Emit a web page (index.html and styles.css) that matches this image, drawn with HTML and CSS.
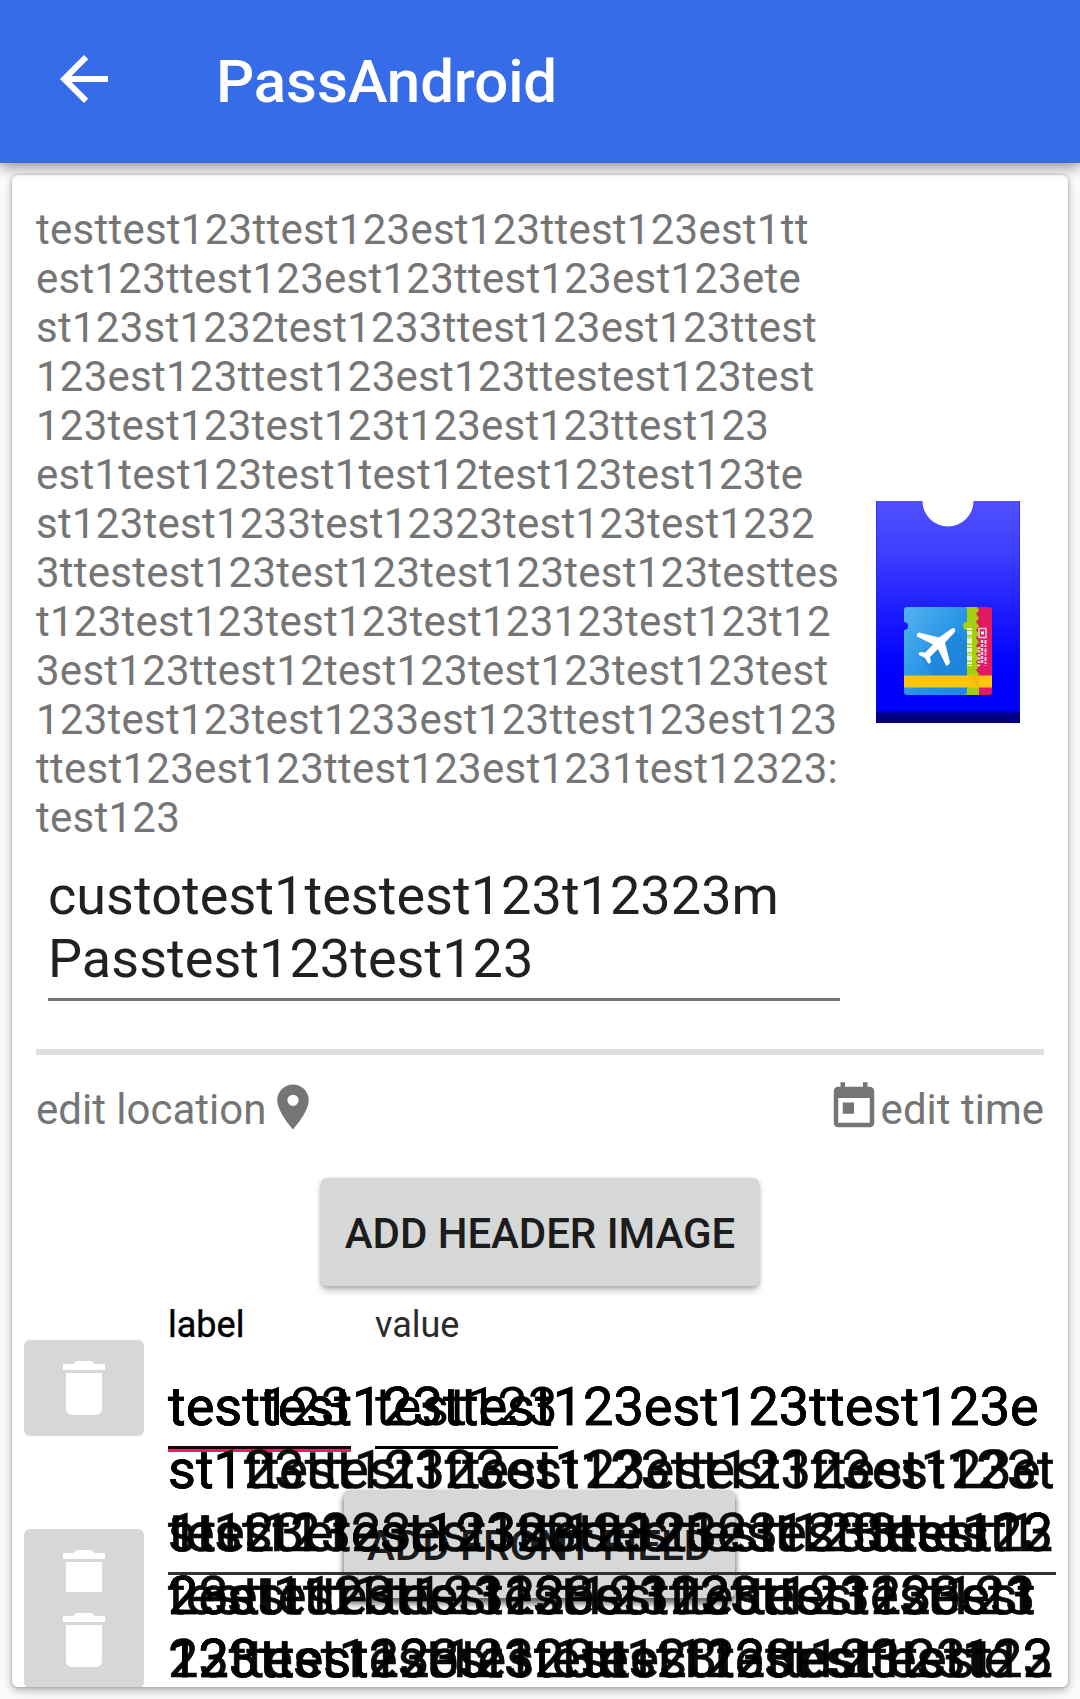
FILE: index.html
```html
<!DOCTYPE html>
<html lang="en">
<head>
<meta charset="utf-8">
<title>PassAndroid</title>
<link rel="stylesheet" href="styles.css">
</head>
<body>
<header class="appbar">
  <svg class="back" viewBox="0 0 24 24"><path d="M20 11H7.83l5.59-5.59L12 4l-8 8 8 8 1.41-1.41L7.83 13H20v-2z"/></svg>
  <h1 class="title">PassAndroid</h1>
</header>
<main class="card">
  <section class="summary">
    <div class="texts">
      <p class="intro">testtest123ttest123est123ttest123est1tt<br>est123ttest123est123ttest123est123ete<br>st123st1232test1233ttest123est123ttest<br>123est123ttest123est123ttestest123test<br>123test123test123t123est123ttest123<br>est1test123test1test12test123test123te<br>st123test1233test12323test123test1232<br>3ttestest123test123test123test123testtes<br>t123test123test123test123123test123t12<br>3est123ttest12test123test123test123test<br>123test123test1233est123ttest123est123<br>ttest123est123ttest123est1231test12323:<br>test123</p>
      <div class="name">custotest1testest123t12323m<br>Passtest123test123</div>
    </div>
    <svg class="pass" viewBox="0 0 144 222">
      <defs>
        <linearGradient id="body" x1="0" y1="0" x2="0" y2="1"><stop offset="0" stop-color="#5050ff"/><stop offset=".25" stop-color="#3c3cff"/><stop offset=".5" stop-color="#1c1cff"/><stop offset=".75" stop-color="#0000ff"/></linearGradient>
        <linearGradient id="edge" x1="0" y1="0" x2="0" y2="1"><stop offset="0" stop-color="#0000cc"/><stop offset=".3" stop-color="#000080"/></linearGradient>
        <linearGradient id="ticket" x1="0" y1="0" x2="1" y2="1"><stop offset="0" stop-color="#54b2ee"/><stop offset=".6" stop-color="#2291e5"/><stop offset="1" stop-color="#1e88e5"/></linearGradient>
      </defs>
      <path fill="url(#body)" d="M0 0H46.500A25.500 25.500 0 0 0 97.500 0H144V222H0z"/>
      <path fill="url(#edge)" d="M0 210H144V222H0z"/>
      <path fill="none" stroke="#2020c0" stroke-opacity=".6" d="M.5 0V210M143.500 0V210"/>
      <rect x="85" y="106" width="31" height="88" rx="3" fill="#e01b62"/>
      <path fill="#a4cf0b" d="M80 106h21l2 3-3 4 3 4-3 4 3 4-3 4 3 4-3 4 3 4-3 4 3 4-3 4 3 4-3 4 3 4-3 4 3 4-3 4 3 4v13H80z"/>
      <path fill="url(#ticket)" d="M31 106H88q3 0 3 3v12a4 4 0 0 0 0 8v62q0 3-3 3H31q-3 0-3-3v-62a4 4 0 0 0 0-8v-12q0-3 3-3z"/>
      <path fill="#1976c9" fill-opacity=".35" d="M78 128l13 13v34H57l-14-22z"/>
      <path fill="#ffc50c" d="M28 174.500h88v12H28z"/>
      <path fill="#f3b90e" d="M91 174.500h12v12z"/>
      <g fill="none" stroke="#fff" stroke-opacity=".8">
        <path stroke-width="5" stroke-dasharray="2 1 4 1.500 1 1 5 1.500" d="M93.500 127V165"/>
        <path stroke-width="1.500" d="M103 127.500h7v9h-7z"/>
        <path stroke-width="2.500" stroke-dasharray="2 1.500" d="M103 146V165"/>
        <path stroke-width="2.500" stroke-dasharray="3 1" d="M106 139V163"/>
        <path stroke-width="2" stroke-dasharray="4 1 2 1.500" d="M109.500 139V165"/>
      </g>
      <path fill="#fff" d="M105 130.500h3v3h-3z"/>
      <path fill="#fff" d="M75 128q3-2 4 0t-1 4L69 141.500l5 20q-2 4-4 3L62 148l-8 8 1 5q-2 3-3 1l-3-5-6-3q-1-2 1-3l5 .500 8-8-16-8q-1-3 2-4l20 5z"/>
    </svg>
  </section>
  <hr class="rule">
  <div class="edits">
    <span class="edit">edit location<svg class="pin" viewBox="0 0 24 24"><path d="M12 2C8.130 2 5 5.130 5 9c0 5.250 7 13 7 13s7-7.750 7-13c0-3.870-3.130-7-7-7zm0 9.500a2.500 2.500 0 0 1 0-5 2.500 2.500 0 0 1 0 5z"/></svg></span>
    <span class="edit"><svg class="cal" viewBox="0 0 24 24"><path d="M19 3h-1V1h-2v2H8V1H6v2H5c-1.110 0-1.990.9-1.990 2L3 19c0 1.100.89 2 2 2h14c1.100 0 2-.9 2-2V5c0-1.100-.9-2-2-2zm0 16H5V8h14v11zM7 10h5v5H7z"/></svg>edit time</span>
  </div>
  <button class="btn header-btn">ADD HEADER IMAGE</button>
  <section class="fields">
    <button class="btn front-btn">ADD FRONT FIELD</button>
    <div class="trash first"><svg viewBox="0 0 24 24"><path d="M6 19c0 1.100.9 2 2 2h8c1.100 0 2-.9 2-2V7H6v12zM19 4h-3.500l-1-1h-5l-1 1H5v2h14V4z"/></svg></div>
    <div class="trash second"><svg viewBox="0 0 24 24"><path d="M6 19c0 1.100.9 2 2 2h8c1.100 0 2-.9 2-2V7H6v12zM19 4h-3.500l-1-1h-5l-1 1H5v2h14V4z"/></svg></div>
    <div class="trash third"><svg viewBox="0 0 24 24"><path d="M6 19c0 1.100.9 2 2 2h8c1.100 0 2-.9 2-2V7H6v12zM19 4h-3.500l-1-1h-5l-1 1H5v2h14V4z"/></svg></div>
    <div class="pair">
      <div class="field focused"><span class="hint">label</span><span class="value">test123</span></div>
      <div class="field"><span class="hint">value</span><span class="value">test123</span></div>
    </div>
    <div class="long">testtest123ttest123est123ttest123e<br>st123ttest123est123ttest123est123t<br>test123est123ttest123est123ttest12<br>testtest1test123est123ttest123est1<br>23ttest123est123ttest123esttest123</div>
    <div class="long">testtest123ttest123est123ttest123e<br>st1ttest123ttest123est123ttest123e<br>st123etest123st1232test1233ttest1<br>23est123ttest123est123ttest123est<br>123ttestest123test123test123test12</div>
    <div class="long lower">1test1123est123ttest123estttest123<br>2est1ttest123est123ttest123est123<br>123ttest123test1test123ttest123te</div>
    <div class="line"></div>
  </section>
</main>
</body>
</html>
```
FILE: styles.css
```css
* { box-sizing: border-box; }
body {
  margin: 0;
  width: 1080px;
  height: 1699px;
  overflow: hidden;
  background: #fafafa;
  font-family: Roboto, sans-serif;
  color: #212121;
}
.appbar {
  position: relative;
  display: flex;
  height: 163px;
  padding: 43px 48px 0;
  background: #366ce8;
  box-shadow: 0 4px 12px rgba(0, 0, 0, .32), 0 2px 16px rgba(0, 0, 0, .16);
}
.back { width: 72px; height: 72px; fill: #fff; }
.title {
  margin: 4px 0 0 96px;
  color: #fff;
  font-size: 60px;
  line-height: 70px;
  font-weight: 500;
  letter-spacing: -.1px;
}
.card {
  display: flex;
  flex-direction: column;
  height: 1512px;
  margin: 12px 12px 0;
  overflow: hidden;
  border-radius: 6px;
  background: #fff;
  box-shadow: 0 3px 8px rgba(0, 0, 0, .32), 0 0 3px rgba(0, 0, 0, .18);
}
.summary {
  display: flex;
  justify-content: space-between;
  height: 874px;
  padding: 30px 48px 0 24px;
}
.intro {
  margin: 0;
  color: #757575;
  font-size: 42px;
  line-height: 49px;
  letter-spacing: .25px;
  white-space: nowrap;
}
.texts { width: 804px; }
.name {
  width: 792px;
  height: 137px;
  margin: 22px 0 0 12px;
  border-bottom: 3px solid #757575;
  font-size: 54px;
  line-height: 63px;
  letter-spacing: .04px;
}
.pass { width: 144px; height: 222px; margin-top: 296px; }
.rule { width: 1008px; height: 6px; margin: 0 24px; border: 0; background: #dedede; }
.edits {
  display: flex;
  justify-content: space-between;
  height: 123px;
  padding: 25px 24px 0;
  color: #757575;
  font-size: 42px;
}
.edit { display: flex; height: 60px; line-height: 60px; }
.edit svg { width: 54px; height: 54px; fill: #757575; }
.btn {
  border: 0;
  border-radius: 6px;
  background: #d6d7d7;
  color: #1c1c1c;
  font: 500 42px/108px Roboto, sans-serif;
  letter-spacing: -.06px;
  padding: 2px 0 0;
  white-space: nowrap;
  box-shadow: 0 5px 6px rgba(0, 0, 0, .22), 0 1px 4px rgba(0, 0, 0, .18);
}
.header-btn { align-self: center; width: 438px; height: 108px; }
/* Overlapping field rows share one stacking area */
.fields {
  position: relative;
  flex: 1;
  margin-top: 14px;
}
.front-btn {
  position: absolute;
  left: 331.5px;
  top: 190px;
  width: 391px;
  height: 108px;
  box-shadow: 0 6px 6px rgba(0, 0, 0, .5), 0 2px 6px rgba(0, 0, 0, .3);
}
.trash {
  position: absolute;
  left: 12px;
  display: flex;
  justify-content: center;
  width: 120px;
  height: 96px;
  padding-top: 12px;
  border-radius: 6px;
  background: #d6d7d7;
}
.trash svg { width: 72px; height: 72px; fill: #fff; }
.first { top: 40px; }
.second { top: 229px; }
.third { top: 292px; border-radius: 0 0 6px 6px; }
.pair { position: absolute; left: 156px; top: 0; display: flex; gap: 24px; }
.field { display: flex; flex-direction: column; width: 183px; height: 149px; border-bottom: 3px solid #000; }
.hint { color: #2a2a2a; font-size: 36px; line-height: 42px; margin-top: 4px; }
.focused .hint { color: #000; -webkit-text-stroke: .4px #000; }
.focused { border-color: #1a000a; box-shadow: 0 3px 0 #e91e63; }
.value { margin-top: 29px; color: #000; font-size: 54px; line-height: 63px; }
.long {
  position: absolute;
  left: 156px;
  top: 75px;
  color: rgba(0, 0, 0, .96);
  font-size: 54px;
  line-height: 63px;
  letter-spacing: .03px;
  white-space: nowrap;
  -webkit-text-stroke: .6px #000;
}
.lower { top: 201px; }
.line { position: absolute; left: 156px; top: 272px; width: 888px; height: 3px; background: #303032; }
```
